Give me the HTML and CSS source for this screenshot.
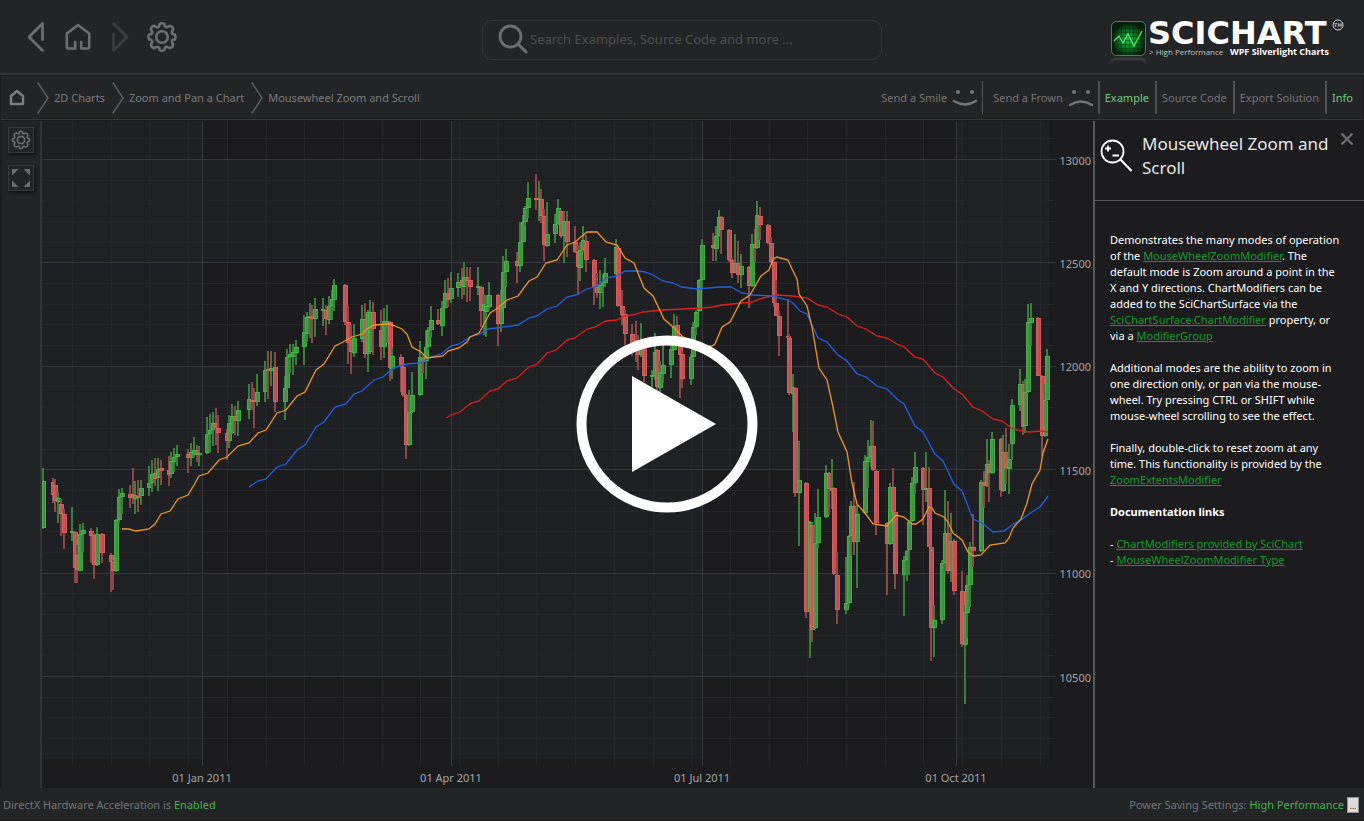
FILE: index.html
```html
<!DOCTYPE html>
<html lang="en">
<head>
<meta charset="utf-8">
<title>SciChart - Mousewheel Zoom and Scroll</title>
<link rel="stylesheet" href="styles.css">
</head>
<body>
<svg class="defs" aria-hidden="true">
  <symbol id="gear" viewBox="0 0 32 32">
    <path fill="none" stroke="currentColor" stroke-width="2.6" stroke-linejoin="round" d="M13.2 5.2 L13.6 3 Q16 1.6 18.4 3 L18.8 5.2 Q20 6.8 21.8 5.8 L23.8 4.8 Q26.600 5.400 27.200 8.200 L26.200 10.200 Q25.200 12 26.800 13.200 L29 13.600 Q30.400 16 29 18.400 L26.800 18.800 Q25.200 20 26.200 21.800 L27.200 23.800 Q26.600 26.600 23.800 27.200 L21.800 26.200 Q20 25.200 18.800 26.800 L18.400 29 Q16 30.400 13.600 29 L13.200 26.800 Q12 25.200 10.200 26.200 L8.200 27.200 Q5.400 26.600 4.800 23.800 L5.800 21.800 Q6.800 20 5.200 18.800 L3 18.400 Q1.600 16 3 13.600 L5.200 13.200 Q6.800 12 5.800 10.200 L4.800 8.200 Q5.400 5.400 8.200 4.800 L10.200 5.800 Q12 6.800 13.200 5.200 Z"/>
    <circle cx="16" cy="16" r="5.800" fill="none" stroke="currentColor" stroke-width="2.6"/>
  </symbol>
  <symbol id="chevron" viewBox="0 0 12 32"><path d="M.7.5 L11 16 L.7 31.500" fill="none" stroke="currentColor" stroke-width="1.5"/></symbol>
</svg>
<header class="top">
  <nav class="tools" aria-label="Navigation">
    <button class="icon back" aria-label="Back"><svg width="18" height="32" viewBox="0 0 18 32"><path d="M15.500 18.500 V2.500 L2 16 L15.500 29.500" fill="none" stroke="currentColor" stroke-width="2.8" stroke-linejoin="round" stroke-linecap="round"/></svg></button>
    <button class="icon home" aria-label="Home"><svg width="26" height="28" viewBox="0 0 26 28"><path d="M10.200 19 V25.500 H3.500 Q1.800 25.500 1.800 23.800 V10.500 L13 2 L24.200 10.500 V23.800 Q24.200 25.500 22.500 25.500 H16.200 V19" fill="none" stroke="currentColor" stroke-width="2.6" stroke-linejoin="round" stroke-linecap="round"/></svg></button>
    <button class="icon forward" aria-label="Forward" disabled><svg width="18" height="32" viewBox="0 0 18 32"><path d="M2.500 13.500 V29.500 L16 16 L2.500 2.500" fill="none" stroke="currentColor" stroke-width="2.8" stroke-linejoin="round" stroke-linecap="round"/></svg></button>
    <button class="icon settings" aria-label="Settings"><svg width="32" height="32"><use href="#gear"/></svg></button>
  </nav>
  <label class="search">
    <svg width="30" height="30" viewBox="0 0 30 30"><circle cx="12.500" cy="12.500" r="10.500" fill="none" stroke="currentColor" stroke-width="2.800"/><path d="M20 20 L28 28" stroke="currentColor" stroke-width="3" stroke-linecap="round"/></svg>
    <input type="text" aria-label="Search" placeholder="Search Examples, Source Code and more ...">
  </label>
  <a class="logo" href="#" aria-label="SciChart">
    <svg width="236" height="58" viewBox="0 -8 236 58">
      <defs>
        <radialGradient id="glow" cy=".55"><stop offset="0" stop-color="#12c832"/><stop offset=".4" stop-color="#0b8a27"/><stop offset="1" stop-color="#04200a"/></radialGradient>
        <linearGradient id="fade" x2="0" y2="1"><stop offset="0" stop-color="#3b3d3f"/><stop offset="1" stop-color="#232426"/></linearGradient>
        <pattern id="mesh" width="4" height="4" patternUnits="userSpaceOnUse"><path d="M0 3.500 H4 M3.500 0 V4" stroke="#031c08" stroke-width=".7" opacity=".6"/></pattern>
      </defs>
      <rect x="1.500" y="4.500" width="34" height="34" rx="5" fill="url(#glow)"/>
      <rect x="1.500" y="4.500" width="34" height="34" rx="5" fill="url(#mesh)" stroke="#3f8850"/>
      <path d="M4 24 L9 19 L13 26 L18 17 L24 29 L32 14" fill="none" stroke="#62e078" stroke-width="1.300"/>
      <path d="M1.500 47 Q2 42 7 42 H30 Q35 42 35.500 47" fill="none" stroke="url(#fade)" stroke-width="3"/>
      <text x="38" y="27" class="brand">SCICHART</text>
      <circle cx="228" cy="8" r="5" fill="none" stroke="#d0d0d0"/>
      <text x="228" y="10" class="tm" text-anchor="middle">TM</text>
      <text x="39" y="38" class="tag">&gt; High Performance</text>
      <text x="120" y="38" class="tag strong">WPF Silverlight Charts</text>
    </svg>
  </a>
</header>
<div class="bar">
  <nav class="crumbs" aria-label="Breadcrumb">
    <a href="#" aria-label="Home"><svg width="16" height="17" viewBox="0 0 16 17"><path d="M2 7 L8 2 L14 7 V15 H2 Z" fill="none" stroke="currentColor" stroke-width="2.500" stroke-linejoin="round"/></svg></a>
    <svg class="sep" width="12" height="32"><use href="#chevron"/></svg>
    <a href="#">2D Charts</a>
    <svg class="sep" width="12" height="32"><use href="#chevron"/></svg>
    <a href="#">Zoom and Pan a Chart</a>
    <svg class="sep" width="12" height="32"><use href="#chevron"/></svg>
    <a href="#">Mousewheel Zoom and Scroll</a>
  </nav>
  <div class="actions">
    <button class="face">Send a Smile <svg width="26" height="20" viewBox="0 0 26 20"><circle cx="6" cy="4" r="2" fill="currentColor"/><circle cx="20" cy="4" r="2" fill="currentColor"/><path d="M2 13 Q13 20 24 13" fill="none" stroke="currentColor" stroke-width="2.500" stroke-linecap="round"/></svg></button>
    <button class="face">Send a Frown <svg width="26" height="20" viewBox="0 0 26 20"><circle cx="6" cy="4" r="2" fill="currentColor"/><circle cx="20" cy="4" r="2" fill="currentColor"/><path d="M2 17 Q13 10 24 17" fill="none" stroke="currentColor" stroke-width="2.500" stroke-linecap="round"/></svg></button>
    <button class="tab on">Example</button>
    <button class="tab">Source Code</button>
    <button class="tab">Export Solution</button>
    <button class="tab on">Info</button>
  </div>
</div>
<main class="work">
  <aside class="side">
    <button aria-label="Chart settings"><svg width="20" height="20"><use href="#gear"/></svg></button>
    <button aria-label="Full screen"><svg width="18" height="18" viewBox="0 0 18 18"><path d="M0 0 H6.500 L0 6.500 Z M18 0 V6.500 L11.500 0 Z M0 18 V11.500 L6.500 18 Z M18 18 H11.500 L18 11.500 Z" fill="currentColor"/></svg></button>
  </aside>
  <section class="chart" aria-label="Price chart">
    <svg id="plot" viewBox="42 121 1051 667" preserveAspectRatio="none"></svg>
    <div id="labels"></div>
    <button class="play" aria-label="Play"><svg width="182" height="178" viewBox="0 0 182 178"><ellipse cx="91" cy="89" rx="85.500" ry="83.500" fill="none" stroke="#fff" stroke-width="10"/><path d="M56 41 L140 89 L56 137 Z" fill="#fff"/></svg></button>
  </section>
  <aside class="info">
    <div class="info-head">
      <svg width="34" height="34" viewBox="0 0 34 34"><circle cx="12.500" cy="12.500" r="11" fill="none" stroke="#fff" stroke-width="1.800"/><path d="M20.500 20.500 L31.500 32" stroke="#fff" stroke-width="2.200"/><path d="M5 9.500 H11 M8 6.500 V12.500 M12.500 16.500 H19" stroke="#fff" stroke-width="1.800"/></svg>
      <h1>Mousewheel Zoom and Scroll</h1>
      <button class="close" aria-label="Close"><svg width="14" height="14" viewBox="0 0 14 14"><path d="M1.500 1.500 L12.500 12.500 M12.500 1.500 L1.500 12.500" stroke="currentColor" stroke-width="2.4"/></svg></button>
    </div>
    <div class="info-body">
      <p>Demonstrates the many modes of operation<br>of the <a href="#">MouseWheelZoomModifier</a>. The<br>default mode is Zoom around a point in the<br>X and Y directions. ChartModifiers can be<br>added to the SciChartSurface via the<br><a href="#">SciChartSurface.ChartModifier</a> property, or<br>via a <a href="#">ModifierGroup</a></p>
      <p>Additional modes are the ability to zoom in<br>one direction only, or pan via the mouse-<br>wheel. Try pressing CTRL or SHIFT while<br>mouse-wheel scrolling to see the effect.</p>
      <p>Finally, double-click to reset zoom at any<br>time. This functionality is provided by the<br><a href="#">ZoomExtentsModifier</a></p>
      <h2>Documentation links</h2>
      <p>- <a href="#">ChartModifiers provided by SciChart</a><br>- <a href="#">MouseWheelZoomModifier Type</a></p>
    </div>
  </aside>
</main>
<footer class="status">
  <span>DirectX Hardware Acceleration is <b>Enabled</b></span>
  <span class="power">Power Saving Settings: <b>High Performance</b><button aria-label="Power settings">...</button></span>
</footer>
<script src="chart.js"></script>
</body>
</html>
```
FILE: styles.css
```css
* { box-sizing: border-box; }
body {
  margin: 0;
  min-height: 100vh;
  display: flex;
  flex-direction: column;
  background: #1c1c1e;
  color: #747577;
  font: 11px/16px "Noto Sans", "Open Sans", sans-serif;
}
button { background: none; border: 0; padding: 0; margin: 0; font: inherit; color: inherit; }
a { color: inherit; text-decoration: none; }
svg { display: block; flex: none; }
.defs { position: absolute; width: 0; height: 0; }

.top {
  height: 75px;
  display: grid;
  grid-template-columns: 1fr 400px 1fr;
  align-items: center;
  background: #232426;
  border-bottom: 2px solid #33343a;
}
.tools { display: flex; align-items: center; padding-left: 27px; color: #6d6e70; }
.home { margin-left: 20px; }
.forward { margin-left: 20px; color: #3b3c3e; }
.settings { margin-left: 17px; }
.search {
  height: 40px;
  margin-top: 6px;
  padding: 0 0 2px 15px;
  display: flex;
  align-items: center;
  gap: 2px;
  border: 1px solid #33343a;
  border-radius: 10px;
  color: #6d6e70;
}
.search input {
  flex: 1;
  min-width: 0;
  border: 0;
  outline: 0;
  padding: 0;
  background: none;
  color: #98999b;
  font: 13px/20px "Noto Sans", "Open Sans", sans-serif;
}
.search input::placeholder { color: #4e4f51; opacity: 1; }
.logo { justify-self: end; margin: 3px 18px 0 0; }
.brand { font: bold 32px "DejaVu Sans", sans-serif; fill: #fff; }
.tm { font: bold 5px "DejaVu Sans", sans-serif; fill: #b0b0b0; }
.tag { font: 8px "Open Sans", sans-serif; fill: #c4c4c4; }
.strong { font-weight: bold; font-size: 9px; fill: #fff; }

.bar {
  height: 45px;
  margin: 0 1px;
  display: flex;
  justify-content: space-between;
  align-items: center;
  background: #232426;
  border-top: 1px solid #1a1a1c;
  border-bottom: 1px solid #37383a;
}
.crumbs { display: flex; align-items: center; padding-left: 8px; color: #7b7c7e; }
.crumbs .sep { margin: 0 5px 0 7px; color: #5c5d5f; }
.crumbs .sep:nth-of-type(1) { margin-left: 12px; }
.actions { display: flex; align-items: center; }
.actions button { height: 33px; padding: 0 6px 0 5px; border-left: 2px solid #515254; white-space: nowrap; }
.actions .face { display: flex; align-items: center; gap: 5px; padding: 0 4px 0 10px; border-left-width: 1px; }
.actions .face:first-child { border-left: 0; }
.actions .on { color: #6fcf7c; }
.actions button:last-child { padding-right: 10px; }

.work { flex: 1; display: flex; min-height: 0; padding-top: 1px; }
.side {
  width: 40px;
  margin-left: 2px;
  padding: 6px 0 0 6px;
  display: flex;
  flex-direction: column;
  gap: 12px;
  background: #232426;
  border-right: 2px solid #33343a;
}
.side button {
  width: 26px;
  height: 26px;
  display: grid;
  place-items: center;
  border: 1px solid #37383a;
  color: #6d6e70;
  box-shadow: 1px 2px 3px #111;
}
.chart { flex: 1; position: relative; min-width: 0; color: #a4a5a7; }
.chart > svg { position: absolute; inset: 0; width: 100%; height: 100%; }
.ylab { position: absolute; right: 2px; transform: translateY(-50%); }
.xlab { position: absolute; transform: translate(-50%, -50%); white-space: nowrap; }
.play { position: absolute; left: 59.5%; top: 45.4%; transform: translate(-50%, -50%); }

.info { width: 271px; border-left: 2px solid #58595b; color: #fff; }
.info-head {
  height: 80px;
  padding: 11px 10px 0 5px;
  display: flex;
  align-items: flex-start;
  border-bottom: 1px solid #58595b;
}
.info-head > svg { margin-top: 7px; }
.info-head h1 { flex: 1; margin: 0 0 0 8px; font-weight: normal; font-size: 17px; line-height: 24px; color: #e6e6e8; }
.close { color: #6d6e70; }
.info-body { padding: 31px 4px 0 15px; white-space: nowrap; }
.info-body p, .info-body h2 { margin: 0 0 16px; font-size: 11px; line-height: 16px; }
.info-body a { color: #189a2f; text-decoration: underline; }

.status {
  height: 33px;
  padding: 1px 5px 0 3px;
  display: flex;
  align-items: center;
  justify-content: space-between;
  background: #232426;
  border-bottom: 1px solid #1b1718;
}
.status b { font-weight: normal; color: #3fb54c; }
.power { display: flex; align-items: center; gap: 3px; }
.power button {
  width: 12px;
  height: 16px;
  border: 1px solid #909090;
  background: #dcdcdc;
  color: #222;
  font-size: 8px;
  line-height: 16px;
}
```
FILE: chart.js
```js
// Candles: x, high, low, body top, body bottom, direction.
const candles = `43 468 529 481 528 g|52.5 478 503 482 495 r|55 479 512 485 501 r|57.7 492 523 498 502 g|60.7 499 536 504 514 r|63.7 509 549 514 533 r|72 507 541 531 532 g|74.5 531 583 532 568 r|76.5 545 583 555 570 r|79.7 524 571 534 571 g|82.7 523 552 530 534 g|90.7 528 563 531 536 r|93.7 533 579 535 565 r|96.7 527 566 534 565 g|101.7 533 563 534 553 r|110.7 553 592 555 562 r|113 560 590 562 571 r|115.7 519 572 520 571 g|118.7 489 523 497 520 g|121.7 488 514 493 497 g|129.7 485 508 494 498 r|133 468 504 494 498 r|135 481 514 495 499 g|138 480 512 496 497 r|140.7 480 505 488 496 g|148.7 466 496 483 488 g|152 460 492 474 483 g|155 458 486 473 479 r|158 458 491 469 478 g|160.5 460 485 468 471 r|168.7 456 486 470 475 r|171.3 452 478 461 474 g|174.3 448 472 457 462 g|177 445 466 454 457 g|187.7 449 473 454 458 r|191 443 466 452 458 g|194 437 457 450 455 g|196.7 445 462 450 455 r|199 446 466 453 455 g|207 417 454 434 453 g|210 414 452 430 434 g|213 412 446 423 430 g|216 408 445 423 428 r|218 415 453 428 433 r|226.7 429 460 433 441 r|229 415 448 423 441 g|231.7 404 434 416 433 g|235 406 435 416 421 r|238 401 436 410 421 g|248.7 384 419 399 410 g|252 382 410 400 402 r|254 388 428 400 402 r|257 374 406 392 402 g|264.7 361 402 370 392 g|268 351 399 369 370 r|271 351 386 368 371 g|274.5 352 412 367 402 r|284.5 376 420 388 402 g|286.7 349 389 357 388 g|289.7 344 373 354 357 g|292.7 344 375 352 357 g|295.5 340 365 347 353 g|304 315 365 332 347 g|306.7 312 342 317 334 g|310 303 338 316 318 g|312 305 343 316 319 r|314.7 298 337 309 319 g|323 298 326 309 310 g|326 305 335 310 319 r|328.7 296 324 306 320 g|331.7 290 320 299 306 g|334 279 311 285 300 g|345 284 325 285 322 r|348 306 364 322 343 r|351 325 374 340 352 r|354 324 357 338 353 g|362 305 342 319 339 g|365 303 358 319 354 r|368 310 372 312 354 g|370 300 353 312 352 g|372.7 302 355 312 329 r|380.7 310 360 330 347 r|383.7 308 358 321 347 g|387 305 343 321 324 g|389.7 321 381 322 368 r|392 348 379 356 369 g|400.7 354 392 357 367 r|403 367 397 367 395 r|405.5 394 459 395 445 r|408.5 390 446 412 445 g|411.7 372 413 395 412 g|419.7 341 396 357 395 g|422.7 355 373 358 362 r|426 330 379 347 361 g|428 327 350 330 347 g|430.7 306 338 320 330 g|438.3 309 325 320 324 r|441.7 301 336 308 326 g|445 280 309 293 308 g|448 278 307 293 300 r|450.7 272 303 288 299 g|458.3 273 297 282 288 g|462 268 299 280 286 r|463.7 262 295 277 287 g|466.7 267 302 277 281 r|470 267 301 280 287 r|478 267 295 286 288 g|480.7 286 327 287 311 r|483.5 295 335 304 311 g|486 295 337 306 312 g|489 282 310 295 307 g|497.7 294 346 295 324 r|500.5 290 332 308 324 g|503 256 308 272 308 g|505.7 249 287 261 272 g|516.7 252 283 261 266 r|519.5 222 272 242 266 g|522.5 215 243 222 242 g|525.3 206 226 208 222 g|527.7 182 218 198 208 g|536 174 210 198 199 r|539 181 221 198 199 g|541.3 189 223 199 216 r|544.3 209 261 216 245 r|546.7 202 247 234 246 g|555.3 214 243 224 234 g|558 199 225 208 224 g|561 210 238 211 236 r|564 211 263 221 236 g|566.7 211 257 221 242 r|574.7 226 253 242 252 r|577.7 246 295 252 267 r|579.7 242 281 250 268 g|583 226 252 240 250 g|585.7 235 272 241 260 r|593.7 259 305 260 287 r|596.7 273 298 287 293 r|599.7 270 309 285 293 g|602.5 274 307 283 286 g|604.7 258 287 273 283 g|615.7 239 275 247 274 g|618.3 246 307 248 306 r|621.7 290 325 306 315 r|624.7 310 345 314 334 r|632.3 324 356 334 347 r|635.7 321 362 340 352 r|638 335 370 345 355 r|641 323 357 348 355 g|643.7 340 382 347 376 r|652.3 370 387 375 377 g|654.7 333 380 352 376 g|657 349 392 350 387 r|660 361 393 372 388 g|662.7 343 383 365 374 g|671.3 344 378 349 365 g|674 314 350 326 350 g|677 316 345 325 337 r|680 336 398 337 355 r|682.3 351 388 354 379 r|690.7 354 385 357 379 g|693.3 322 358 327 357 g|696 310 335 312 327 g|698.7 279 312 280 311 g|701.7 239 288 245 280 g|712.7 233 261 245 248 r|715.7 226 261 236 249 g|719 210 237 217 236 g|721 216 254 217 230 r|729.3 229 262 230 260 r|732 258 278 260 273 r|735 234 273 263 273 g|738 241 283 263 275 r|740.7 254 288 266 275 g|749 266 308 267 286 r|751.7 234 287 244 286 g|754.7 229 262 244 248 r|757 201 249 215 248 g|760 207 240 216 225 r|767.7 224 244 225 243 r|770.7 237 263 243 262 r|773.7 261 307 262 303 r|776.3 280 316 303 316 r|778.7 311 356 316 336 r|787.7 299 338 336 338 r|789.3 334 395 338 393 r|792.7 374 432 387 394 g|795.3 387 497 388 493 r|799 441 546 480 493 g|806.3 482 618 483 612 r|809.7 521 658 522 612 g|812.3 523 642 525 630 r|815 513 629 543 628 g|817.7 489 548 517 543 g|825.7 465 518 473 517 g|829 472 515 473 489 r|831.7 459 509 488 491 g|834.3 487 575 488 574 r|837 552 624 575 610 r|845.7 557 614 603 610 g|848.7 535 605 536 603 g|851 501 556 506 536 g|853.7 482 555 506 542 r|856.7 505 588 514 542 g|864.7 455 514 461 513 g|867.7 440 488 457 462 g|870.7 420 467 446 457 g|873 421 471 446 470 r|875.7 470 535 471 523 r|887 522 595 523 544 r|889.7 483 545 487 544 g|892.7 468 512 487 512 r|895 511 589 512 574 r|903.7 556 616 560 575 g|907 550 581 551 560 g|908.7 520 575 522 550 g|911.7 477 522 483 521 g|914.7 452 494 467 483 g|923 467 525 468 490 r|926 452 502 488 489 g|928.7 467 547 488 547 r|930.7 546 661 547 628 r|933.7 605 657 620 628 g|941.7 560 624 563 620 g|944.7 490 572 533 563 g|948 501 574 533 571 r|951 513 582 541 571 g|953.7 539 595 541 591 r|961.7 571 647 591 644 r|964.7 605 704 612 645 g|967 575 638 585 613 g|969.7 542 607 547 585 g|972.7 514 567 547 551 r|980.7 480 552 482 551 g|983.7 471 508 482 486 r|986.7 439 487 464 486 g|989 460 502 464 473 r|991.7 432 474 439 473 g|1000.7 438 497 439 490 r|1003 435 492 452 491 g|1006 428 484 452 468 r|1008.7 444 494 459 469 g|1011.7 399 460 405 444 g|1019.7 369 411 384 405 g|1023 381 435 384 427 r|1024.7 379 433 392 426 g|1027.7 304 393 322 392 g|1030.7 303 346 318 323 g|1038.3 317 376 318 376 r|1041.7 375 456 376 436 r|1044.7 384 437 400 436 g|1047 349 401 356 400 g`;

const averages = [
  ['#e0201c', '446,418 451,415 460,412 471,403 479,401 490,391 498,389 507,381 517,378 529,367 537,364 547,353 556,350 567,340 575,338 587,329 595,327 606,321 617,320 625,316 633,315 643,312 662,310 682,309 702,308 713,307 722,305 752,302 763,298 777,295 793,296 807,298 818,305 827,307 838,314 847,317 857,326 866,329 877,336 887,338 897,344 904,347 915,357 923,359 935,373 943,377 954,389 962,394 973,407 982,411 993,419 1002,421 1013,429 1028,432 1043,431 1048,432'],
  ['#2060e4', '249,487 258,481 266,479 277,467 286,464 297,450 305,445 316,427 324,422 335,407 346,404 354,394 362,391 374,380 383,377 393,368 407,364 420,363 431,357 441,354 451,346 459,344 470,337 480,334 488,329 518,325 529,318 537,316 547,309 557,306 567,297 576,295 587,289 597,286 606,278 617,276 625,271 638,271 645,272 653,275 663,281 673,283 682,287 697,289 720,287 731,287 742,293 753,295 772,296 788,300 793,303 800,311 807,314 818,338 827,342 838,355 847,361 857,374 866,377 877,386 887,389 897,399 904,404 915,426 923,432 935,454 943,461 954,484 962,491 973,519 982,523 993,532 1004,531 1012,525 1021,520 1032,512 1040,507 1048,496'],
  ['#ee9628', '122,529 129,529 136,531 149,529 155,524 161,514 170,511 178,499 188,495 194,485 199,476 208,473 219,460 227,457 238,446 249,443 258,433 266,430 277,413 286,410 297,396 305,392 316,370 324,364 335,346 343,342 352,337 362,334 367,329 374,325 390,324 402,329 407,334 412,347 421,352 427,358 443,356 448,351 459,348 467,342 470,337 479,333 483,326 490,313 498,308 507,300 518,296 529,281 537,277 546,263 557,260 567,245 575,242 587,232 597,232 606,242 617,245 625,258 634,263 638,273 644,288 653,296 664,319 673,327 682,336 695,347 712,346 715,344 722,327 730,322 741,301 750,295 761,276 769,270 773,259 777,257 788,260 792,269 797,279 799,294 807,306 812,327 819,368 827,380 833,407 838,432 847,452 852,483 857,504 865,513 873,524 887,526 896,515 904,517 912,524 916,524 923,519 929,507 932,508 935,513 944,517 948,522 953,533 962,540 968,552 974,556 981,555 990,545 1005,543 1009,538 1013,528 1021,519 1027,503 1032,484 1040,470 1043,453 1048,439']
];
const months = [[202, '01 Jan 2011'], [451, '01 Apr 2011'], [702, '01 Jul 2011'], [956, '01 Oct 2011']];
const prices = [13000, 12500, 12000, 11500, 11000, 10500];
const priceY = i => 159.5 + i * 103.4;

let s = '';
const rect = (x, y, w, h, fill) => { s += `<rect x="${x}" y="${y}" width="${w}" height="${h}" fill="${fill}"/>`; };

// Alternating bands between major grid lines
[[42, 202], [451, 702], [956, 1049]].forEach(([a, b]) => rect(a, 121, b - a, 638, '#1f2024'));
[0, 2, 4].forEach(i => {
  rect(42, priceY(i), 1007, 103, '#1f2024');
  [[42, 202], [451, 702], [956, 1049]].forEach(([a, b]) => rect(a, priceY(i), b - a, 103, '#202122'));
});

// Minor and major grid
for (let x = 72; x < 1049; x += 38.7) rect(Math.round(x), 121, 1, 643, '#242527');
for (let y = 138.8; y < 759; y += 20.68) rect(42, Math.floor(y), 1012, 1, '#242527');
months.forEach(([x]) => rect(x, 121, 1, 645, '#35373c'));
prices.forEach((p, i) => rect(42, Math.floor(priceY(i)), 1014, 1, '#35373c'));

// Candles
candles.split('|').forEach(row => {
  const [x, hi, lo, top, bottom, dir] = row.split(' ');
  const up = dir === 'g', line = up ? '#48b84b' : '#e0605f';
  const cx = Math.round(x), left = Math.max(42, cx - 2);
  rect(Math.max(42, cx - 1), hi, 2, lo - hi, up ? '#397f3b' : '#8c4648');
  s += `<rect x="${left + .5}" y="${+top + .5}" width="${cx + 2 - left}" height="${Math.max(1, bottom - top - 1)}" fill="${up ? '#4a9a48' : '#c95b5c'}" fill-opacity=".85" stroke="${line}" stroke-opacity=".9"/>`;
});

averages.forEach(([color, pts]) => {
  s += `<polyline points="${pts}" fill="none" stroke="${color}" stroke-width="1.3"/>`;
});
document.getElementById('plot').innerHTML = s;

document.getElementById('labels').innerHTML =
  prices.map((p, i) => `<span class="ylab" style="top:${(priceY(i) + 1 - 121) / 6.67}%">${p}</span>`).join('') +
  months.map(([x, t]) => `<span class="xlab" style="left:${(x - 42) / 10.51}%;top:98.5%">${t}</span>`).join('');
```
